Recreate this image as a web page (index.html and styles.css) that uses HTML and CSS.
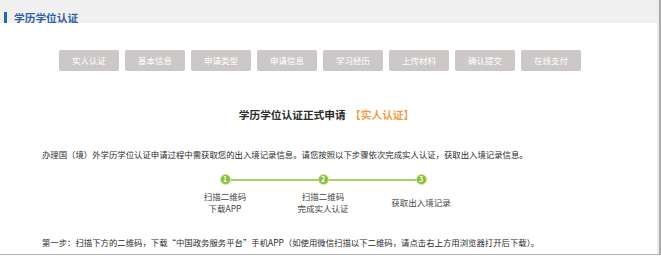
FILE: index.html
```html
<!DOCTYPE html>
<html lang="zh-CN">
<head>
    <meta charset="UTF-8">
    <title>学历学位认证</title>
    <link rel="stylesheet" href="styles.css">
</head>
<body>
    <div class="frame">
        <div class="page">
            <!-- Header -->
            <div class="head">
                <span class="head-title">学历学位认证</span>
            </div>

            <div class="main">
                <!-- Progress tabs -->
                <ul class="tabs">
                    <li>实人认证</li>
                    <li>基本信息</li>
                    <li>申请类型</li>
                    <li>申请信息</li>
                    <li>学习经历</li>
                    <li>上传材料</li>
                    <li>确认提交</li>
                    <li>在线支付</li>
                </ul>

                <h2 class="title">学历学位认证正式申请 <span class="hl">【实人认证】</span></h2>

                <p class="text intro">办理国（境）外学历学位认证申请过程中需获取您的出入境记录信息。请您按照以下步骤依次完成实人认证，获取出入境记录信息。</p>

                <!-- Steps -->
                <div class="steps">
                    <div class="step">
                        <span class="dot">1</span>
                        <div class="label">扫描二维码<br>下载APP</div>
                    </div>
                    <div class="step">
                        <span class="dot">2</span>
                        <div class="label">扫描二维码<br>完成实人认证</div>
                    </div>
                    <div class="step">
                        <span class="dot">3</span>
                        <div class="label">获取出入境记录</div>
                    </div>
                </div>

                <p class="text note">第一步：扫描下方的二维码，下载“中国政务服务平台”手机APP（如使用微信扫描以下二维码，请点击右上方用浏览器打开后下载）。</p>
            </div>
        </div>
    </div>
</body>
</html>
```

FILE: styles.css
```css
/* Page */
body {
    margin: 0;
    background: #fff;
    font-family: "Noto Sans CJK SC", "Liberation Sans", sans-serif;
    color: #333;
}

.frame {
    width: 659px;
    height: 254px;
    border-right: 2px solid #aaa;
    border-bottom: 1px solid #b4b4b4;
    overflow: hidden;
}

.page {
    width: 657px;
    height: 254px;
    border-right: 2px solid #ececec;
}

/* Header */
.head {
    height: 23px;
    background-color: #f0f0f0;
    padding: 3px 0 0 4px;
    box-sizing: border-box;
}

.head-title {
    display: inline-block;
    border-left: 3px solid #2c63ad;
    padding-left: 7px;
    font-size: 10.7px;
    line-height: 11px;
    font-weight: bold;
    color: #2e5f9f;
}

.main {
    padding: 0 42px;
}

/* Tabs */
.tabs {
    list-style: none;
    margin: 27px 0 0;
    padding: 0 0 0 17px;
    display: flex;
    gap: 6px;
}

.tabs li {
    width: 60px;
    height: 21px;
    line-height: 21px;
    text-align: center;
    background-color: #ccc8c7;
    border-radius: 2px;
    color: #fff;
    font-size: 8.5px;
}

/* Title */
.title {
    margin: 37px 0 0;
    padding-right: 4px;
    text-align: center;
    font-size: 10.7px;
    line-height: 14px;
    font-weight: bold;
    color: #2b2b2b;
}

.title .hl {
    margin-left: 2px;
    color: #f29c3f;
}

/* Text */
.text {
    margin: 0;
    font-size: 8.4px;
    line-height: 12.5px;
    color: #2b2b2b;
    white-space: nowrap;
}

.intro {
    margin-top: 26px;
}

.note {
    margin-top: 21px;
}

/* Steps */
.steps {
    position: relative;
    width: 294px;
    margin: 13px 0 0 134px;
    display: grid;
    grid-template-columns: repeat(3, 98px);
}

.steps::before {
    content: "";
    position: absolute;
    left: 49px;
    right: 49px;
    top: 5px;
    height: 2px;
    background-color: #a6d163;
}

.step {
    display: flex;
    flex-direction: column;
    align-items: center;
}

.dot {
    position: relative;
    width: 9px;
    height: 9px;
    border: 1.5px solid #cfe7a8;
    border-radius: 50%;
    background-color: #86c13b;
    color: #fff;
    font-size: 7px;
    font-weight: bold;
    line-height: 9px;
    text-align: center;
}

.label {
    margin-top: 5px;
    height: 25px;
    display: flex;
    align-items: center;
    text-align: center;
    font-size: 8.5px;
    line-height: 12.5px;
    color: #444;
}
```
